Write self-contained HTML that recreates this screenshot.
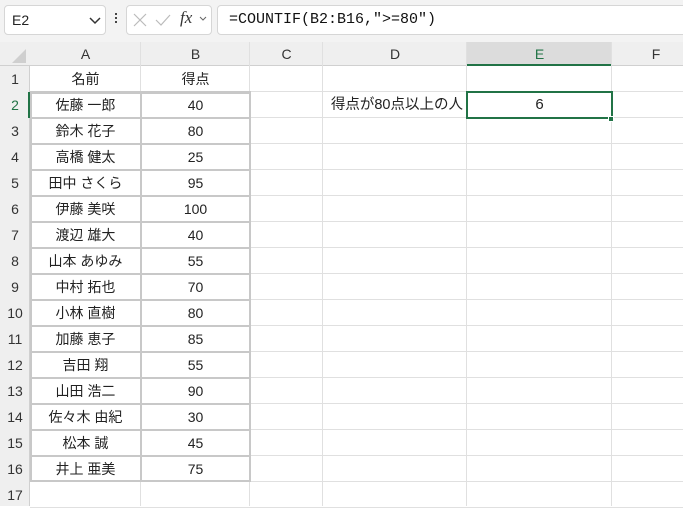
<!DOCTYPE html>
<html><head><meta charset="utf-8"><style>
*{margin:0;padding:0;box-sizing:border-box}
body{width:683px;height:506px;overflow:hidden;background:#fff;font-family:"Liberation Sans","Noto Sans CJK JP",sans-serif;font-size:14px;color:#222;position:relative}
.a{position:absolute}
.top{left:0;top:0;width:683px;height:42px;background:#f3f3f3}
.box{background:#fff;border:1px solid #d6d6d6;border-radius:4px}
.hdr{background:#efefef;color:#333;text-align:center}
.c{position:absolute;text-align:center;line-height:26px;height:26px}
</style></head><body>
<div class="a top"></div>
<div class="a box" style="left:4px;top:5px;width:102px;height:30px"></div>
<div class="a" style="left:12px;top:12px;font-size:14px">E2</div>
<svg class="a" style="left:89px;top:17px" width="12" height="8"><path d="M1 1l5 5 5-5" stroke="#333" stroke-width="1.5" fill="none"/></svg>
<div class="a" style="left:115px;top:13px;width:2px;height:2px;background:#444;box-shadow:0 4px #444,0 8px #444"></div>
<div class="a box" style="left:126px;top:5px;width:86px;height:30px"></div>
<svg class="a" style="left:132px;top:12px" width="80" height="16"><path d="M2 2l12 12M14 2L2 14" stroke="#bbb" stroke-width="1.2"/><path d="M24 8l5 5 9-10" stroke="#bbb" stroke-width="1.2" fill="none"/><path d="M68 5l3 3 3-3" stroke="#666" fill="none"/></svg>
<div class="a" style="left:180px;top:8px;font-family:'Liberation Serif',serif;font-style:italic;font-size:17px;color:#333">fx</div>
<div class="a box" style="left:217px;top:5px;width:470px;height:30px"></div>
<div class="a" style="left:229px;top:11px;font-family:'Liberation Mono',monospace;font-size:15px;color:#111">=COUNTIF(B2:B16,"&gt;=80")</div>

<div class="a hdr" style="left:0;top:42px;width:683px;height:24px;border-bottom:1px solid #d0d0d0"></div>
<div class="a hdr" style="left:0;top:66px;width:30px;height:440px;border-right:1px solid #d0d0d0"></div>
<svg class="a" style="left:10px;top:48px" width="18" height="16"><path d="M16 1V15H2z" fill="#cfcfcf"/></svg>
<div class="a" style="left:467px;top:42px;width:145px;height:24px;background:#dcdcdc;border-bottom:2px solid #217346"></div>
<div id="g"></div>
<script>
var cols=[[30,141,'A'],[141,250,'B'],[250,323,'C'],[323,467,'D'],[467,612,'E'],[612,700,'F']];
var h='';
cols.forEach(function(c){h+='<div class="c" style="left:'+c[0]+'px;top:42px;width:'+(c[1]-c[0])+'px;line-height:24px;color:'+(c[2]=='E'?'#217346':'#333')+'">'+c[2]+'</div>';
h+='<div class="a" style="left:'+(c[1]-1)+'px;top:42px;width:1px;height:464px;background:#e0e0e0"></div>';});
for(var r=1;r<=17;r++){var t=66+26*(r-1);
h+='<div class="a" style="left:30px;top:'+(t+25)+'px;width:653px;height:1px;background:#e0e0e0"></div>';
h+='<div class="c" style="left:0;top:'+t+'px;width:30px;color:'+(r==2?'#217346':'#333')+'">'+r+'</div>';}
var d=[['名前','得点'],['佐藤 一郎',40],['鈴木 花子',80],['高橋 健太',25],['田中 さくら',95],['伊藤 美咲',100],['渡辺 雄大',40],['山本 あゆみ',55],['中村 拓也',70],['小林 直樹',80],['加藤 恵子',85],['吉田 翔',55],['山田 浩二',90],['佐々木 由紀',30],['松本 誠',45],['井上 亜美',75]];
d.forEach(function(x,i){var t=66+26*i;
h+='<div class="c" style="left:30px;top:'+t+'px;width:111px">'+x[0]+'</div><div class="c" style="left:141px;top:'+t+'px;width:109px">'+x[1]+'</div>';
if(i>0)h+='<div class="a" style="left:30px;top:'+(t-1)+'px;width:221px;height:2px;background:#c8c8c8"></div>';});
h+='<div class="a" style="left:30px;top:92px;width:221px;height:390px;border:2px solid #c8c8c8;border-bottom-width:2px"></div>';
h+='<div class="a" style="left:140px;top:92px;width:2px;height:390px;background:#c8c8c8"></div>';
h+='<div class="a" style="left:28px;top:92px;width:2px;height:26px;background:#217346"></div>';
h+='<div class="c" style="left:320px;top:92px;width:147px;text-align:right;padding-right:4px;font-size:14.5px;white-space:nowrap">得点が80点以上の人</div>';
h+='<div class="a" style="left:466px;top:91px;width:147px;height:28px;border:2px solid #217346"></div>';
h+='<div class="c" style="left:467px;top:92px;width:145px;font-size:15px">6</div>';
h+='<div class="a" style="left:608px;top:116px;width:6px;height:6px;background:#217346;border:1px solid #fff"></div>';
document.getElementById('g').innerHTML=h;
</script>
</body></html>
